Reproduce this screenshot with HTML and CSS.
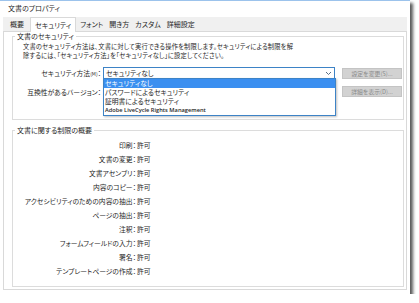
FILE: index.html
```html
<!DOCTYPE html>
<html>
  <head>
    <title>文書のプロパティ</title>
    <meta charset="utf-8" />
    <link rel="stylesheet" href="styles.css">
  </head>
  <body>
    <div class="ventana">
      <div class="titulo">文書のプロパティ</div>

      <div class="pestanas">
        <span class="pestana">概要</span>
        <span class="pestana activa">セキュリティ</span>
        <span class="pestana">フォント</span>
        <span class="pestana">開き方</span>
        <span class="pestana">カスタム</span>
        <span class="pestana">詳細設定</span>
      </div>

      <div class="panel">
        <fieldset class="grupo grupo-seguridad">
          <legend>文書のセキュリティ</legend>
          <p class="descripcion">文書のセキュリティ方法は、文書に対して実行できる操作を制限します。セキュリティによる制限を解<br/>除するには、「セキュリティ方法」を「セキュリティなし」に設定してください。</p>

          <div class="fila-form">
            <label class="etiqueta">セキュリティ方法<span class="atajo">(M)</span>：</label>
            <div class="selector">
              <span class="selector-valor">セキュリティなし</span>
              <svg class="flecha" width="7" height="5" viewBox="0 0 7 5"><path d="M1 1 L3.5 3.5 L6 1" fill="none" stroke="#5a6f86" stroke-width="1"/></svg>
              <ul class="lista">
                <li class="marcado">セキュリティなし</li>
                <li>パスワードによるセキュリティ</li>
                <li>証明書によるセキュリティ</li>
                <li class="adobe">Adobe LiveCycle Rights Management</li>
              </ul>
            </div>
            <button type="button" class="boton" disabled>設定を変更(S)...</button>
          </div>

          <div class="fila-form fila-dos">
            <label class="etiqueta">互換性があるバージョン：</label>
            <div class="hueco"></div>
            <button type="button" class="boton" disabled>詳細を表示(D)...</button>
          </div>
        </fieldset>

        <fieldset class="grupo grupo-resumen">
          <legend>文書に関する制限の概要</legend>
          <div class="resumen">
            <span class="nombre">印刷：</span><span class="valor">許可</span>
            <span class="nombre">文書の変更：</span><span class="valor">許可</span>
            <span class="nombre">文書アセンブリ：</span><span class="valor">許可</span>
            <span class="nombre">内容のコピー：</span><span class="valor">許可</span>
            <span class="nombre">アクセシビリティのための内容の抽出：</span><span class="valor">許可</span>
            <span class="nombre">ページの抽出：</span><span class="valor">許可</span>
            <span class="nombre">注釈：</span><span class="valor">許可</span>
            <span class="nombre">フォームフィールドの入力：</span><span class="valor">許可</span>
            <span class="nombre">署名：</span><span class="valor">許可</span>
            <span class="nombre">テンプレートページの作成：</span><span class="valor">許可</span>
          </div>
        </fieldset>
      </div>
    </div>
  </body>
</html>
```

FILE: styles.css
```css
body {
    margin: 0;
    background-color: #fff;
    font-family: "Noto Sans CJK JP", "Noto Sans", sans-serif;
    font-feature-settings: "palt";
    color: #1f1f1f;
}

.ventana {
    width: 410px;
    height: 294px;
    box-sizing: border-box;
    border-top: 1px solid #9cc3ec;
    background-color: #fff;
    box-shadow: 3px 3px 3px rgba(0, 0, 0, 0.65);
}

.titulo {
    height: 16px;
    line-height: 14px;
    padding-left: 8px;
    font-size: 7px;
}

.pestanas {
    display: flex;
    align-items: flex-end;
    height: 14px;
    margin: 0 3px;
    padding-left: 4px;
    background-color: #f0f0f0;
}

.pestana {
    height: 14px;
    line-height: 14px;
    padding: 0 3px;
    font-size: 7px;
    box-sizing: border-box;
}

.activa {
    height: 15px;
    margin: 0 1px -1px 3px;
    padding: 0 4px;
    background-color: #fff;
    border: 1px solid #d9d9d9;
    border-bottom: none;
    position: relative;
}

.panel {
    height: 259px;
    margin: 0 3px;
    box-sizing: border-box;
    border: 1px solid #d9d9d9;
    padding: 0 2px 0 8px;
}

.grupo {
    margin: 0;
    padding: 0;
    border: 1px solid #dcdcdc;
    min-width: 0;
}

.grupo legend {
    margin-left: 2px;
    padding: 0 2px;
    font-size: 7px;
    line-height: 9px;
}

.grupo-seguridad {
    height: 88px;
    box-sizing: border-box;
}

.descripcion {
    margin: 1px 0 0 10px;
    font-size: 6.3px;
    line-height: 9px;
    letter-spacing: 0.15px;
}

.fila-form {
    display: flex;
    align-items: center;
    margin-top: 7px;
    height: 12px;
}

.fila-dos {
    margin-top: 7px;
    height: 11px;
}

.etiqueta {
    width: 88px;
    flex-shrink: 0;
    text-align: right;
    font-size: 6.8px;
}

.atajo {
    font-size: 5px;
}

.selector {
    position: relative;
    width: 232px;
    height: 12px;
    margin-left: 2px;
    box-sizing: border-box;
    border: 1px solid #3d83c6;
    background-color: #fff;
    display: flex;
    align-items: center;
    justify-content: space-between;
    padding: 0 2px 0 2px;
    font-size: 6.8px;
}

.hueco {
    width: 232px;
    margin-left: 2px;
}

.lista {
    position: absolute;
    top: 10px;
    left: -1px;
    width: 233px;
    margin: 0;
    padding: 0;
    list-style: none;
    box-sizing: border-box;
    border: 1px solid #3d83c6;
    background-color: #fff;
    box-shadow: 1px 1px 2px rgba(0, 0, 0, 0.25);
}

.lista li {
    height: 9px;
    line-height: 9px;
    padding-left: 1px;
    font-size: 6.8px;
}

.lista .marcado {
    background-color: #3b8ff0;
    color: #fff;
}

.lista .adobe {
    font-family: "Open Sans", "DejaVu Sans", sans-serif;
    font-size: 5.7px;
    font-weight: 600;
}

.boton {
    width: 60px;
    height: 11px;
    margin-left: 7px;
    padding: 0;
    box-sizing: border-box;
    border: 1px solid #c4c4c4;
    border-radius: 0;
    background-color: #d2d2d2;
    color: #8a8a8a;
    font-family: inherit;
    font-size: 5.8px;
    line-height: 9px;
    text-align: center;
}

.grupo-resumen {
    margin-top: 6px;
    height: 161px;
    box-sizing: border-box;
}

.resumen {
    display: grid;
    grid-template-columns: 123px auto;
    grid-auto-rows: 14px;
    align-items: center;
    margin-top: 3px;
    font-size: 6.8px;
}

.nombre {
    text-align: right;
}

.valor {
    padding-left: 1px;
}
```
